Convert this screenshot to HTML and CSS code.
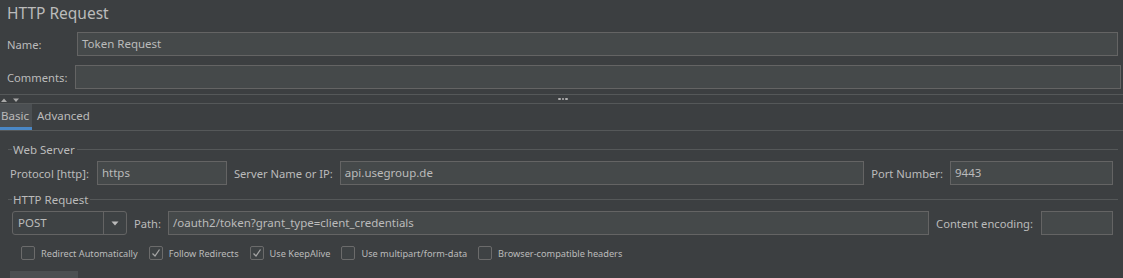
FILE: index.html
```html
<!DOCTYPE html>
<html>
<head>
<meta charset="utf-8">
<link rel="stylesheet" href="styles.css">
</head>
<body>
<div class="page">
  <div class="title">HTTP Request</div>
  <div class="field-row name-row">
    <label class="lbl name-lbl">Name:</label>
    <div class="input grow">Token Request</div>
  </div>
  <div class="field-row comments-row">
    <label class="lbl comments-lbl">Comments:</label>
    <div class="input grow"></div>
  </div>
  <div class="splitter">
    <div class="arrows">
      <svg width="20" height="6" viewBox="0 0 20 6"><path d="M1 5 L4 1.5 L7 5 Z" fill="#a9a9a9"/><path d="M13 1.5 L19 1.5 L16 5 Z" fill="#a9a9a9"/></svg>
    </div>
    <div class="dots"><span></span><span></span><span></span></div>
  </div>
  <div class="tabs">
    <div class="tab active">Basic</div>
    <div class="tab">Advanced</div>
  </div>
  <div class="group">
    <div class="group-title"><span>Web Server</span></div>
    <div class="field-row grp-row">
      <label class="lbl">Protocol [http]:</label>
      <div class="input protocol">https</div>
      <label class="lbl">Server Name or IP:</label>
      <div class="input grow">api.usegroup.de</div>
      <label class="lbl">Port Number:</label>
      <div class="input port">9443</div>
    </div>
  </div>
  <div class="group group2">
    <div class="group-title"><span>HTTP Request</span></div>
    <div class="field-row grp-row row2">
      <div class="combo">
        <div class="combo-text">POST</div>
        <div class="combo-btn"><svg width="8" height="5" viewBox="0 0 8 5"><path d="M0.5 0.5 L7.5 0.5 L4 4.5 Z" fill="#bbbbbb"/></svg></div>
      </div>
      <label class="lbl">Path:</label>
      <div class="input grow">/oauth2/token?grant_type=client_credentials</div>
      <label class="lbl">Content encoding:</label>
      <div class="input encoding"></div>
    </div>
    <div class="checks">
      <div class="check"><span class="box"></span><span class="ctext">Redirect Automatically</span></div>
      <div class="check"><span class="box"><svg width="12" height="12" viewBox="0 0 12 12"><path d="M2.5 6.5 L5 9 L9.5 2.5" fill="none" stroke="#a5a5a5" stroke-width="1.3"/></svg></span><span class="ctext">Follow Redirects</span></div>
      <div class="check"><span class="box"><svg width="12" height="12" viewBox="0 0 12 12"><path d="M2.5 6.5 L5 9 L9.5 2.5" fill="none" stroke="#a5a5a5" stroke-width="1.3"/></svg></span><span class="ctext">Use KeepAlive</span></div>
      <div class="check"><span class="box"></span><span class="ctext">Use multipart/form-data</span></div>
      <div class="check"><span class="box"></span><span class="ctext">Browser-compatible headers</span></div>
    </div>
  </div>
  <div class="bottom-btn"></div>
</div>
</body>
</html>
```

FILE: styles.css
```css
html, body {
  margin: 0;
  padding: 0;
  background: #3c3f41;
  height: 100%;
  overflow: hidden;
}
.page {
  font-family: "Noto Sans", "Open Sans", sans-serif;
  font-size: 11.2px;
  color: #bbbbbb;
}
.title {
  height: 32px;
  line-height: 27px;
  padding-left: 7px;
  font-size: 15.5px;
  color: #bbbbbb;
}
.field-row {
  display: flex;
  align-items: center;
  height: 24px;
}
.lbl {
  white-space: nowrap;
}
.name-row {
  padding-left: 7px;
  padding-right: 5px;
}
.name-lbl {
  width: 70px;
}
.comments-row {
  margin-top: 9px;
  padding-left: 7px;
  padding-right: 2px;
}
.comments-lbl {
  width: 68px;
}
.input {
  box-sizing: border-box;
  height: 24px;
  line-height: 22px;
  background: #45494a;
  border: 1px solid #646464;
  padding: 0 4px;
  font-size: 11.5px;
  color: #bbbbbb;
  white-space: nowrap;
  overflow: hidden;
}
.grow {
  flex: 1;
}
.splitter {
  margin-top: 5px;
  border-top: 1px solid #555859;
  border-bottom: 1px solid #555859;
  height: 8px;
  display: flex;
  align-items: center;
}
.arrows {
  display: flex;
  padding-top: 1px;
}
.dots {
  margin-left: 538px;
  display: flex;
  gap: 1px;
}
.dots span {
  width: 2.5px;
  height: 2.5px;
  border-radius: 50%;
  background: #b0b0b0;
}
.tabs {
  display: flex;
  height: 26px;
  border-bottom: 1px solid #555859;
}
.tab {
  box-sizing: border-box;
  height: 26px;
  line-height: 24px;
  padding: 0 3px 0 1px;
  font-size: 11.5px;
  color: #bbbbbb;
}
.tab.active {
  background: #4b4f52;
  border-bottom: 3px solid #4a88c7;
  line-height: 23px;
  width: 32px;
  padding: 0 0 0 1px;
}
.tab + .tab {
  padding-left: 5px;
}
.group {
  margin: 8px 5px 0 8px;
}
.group2 {
  margin-top: 4px;
}
.group-title {
  display: flex;
  align-items: center;
  height: 20px;
}
.group-title::before {
  content: "";
  width: 4px;
  border-top: 1px solid #555859;
}
.group-title span {
  padding: 0 2px 0 1px;
  font-size: 11.5px;
}
.group-title::after {
  content: "";
  flex: 1;
  border-top: 1px solid #555859;
}
.grp-row {
  margin-top: 2px;
  padding-left: 2px;
  padding-right: 5px;
  gap: 7px;
}
.protocol {
  width: 130px;
  margin-left: 1px;
}
.port {
  width: 163px;
}
.row2 {
  padding-left: 4px;
}
.encoding {
  width: 72px;
  margin-left: 1px;
}
.combo {
  box-sizing: border-box;
  width: 115px;
  height: 24px;
  border: 1px solid #646464;
  border-radius: 3px;
  background: #3e4244;
  display: flex;
  font-size: 11.5px;
}
.combo-text {
  flex: 1;
  line-height: 22px;
  padding-left: 5px;
  border-right: 1px solid #646464;
}
.combo-btn {
  width: 22px;
  display: flex;
  align-items: center;
  justify-content: center;
}
.checks {
  display: flex;
  align-items: center;
  margin-top: 11px;
  padding-left: 13px;
  gap: 11px;
  height: 14px;
}
.check {
  display: flex;
  align-items: center;
  gap: 6px;
}
.box {
  box-sizing: border-box;
  width: 14px;
  height: 14px;
  border: 1px solid #6b6b6b;
  border-radius: 2px;
  background: #3e4244;
  display: flex;
  align-items: center;
  justify-content: center;
}
.ctext {
  font-size: 9.2px;
  white-space: nowrap;
}
.bottom-btn {
  margin: 11px 0 0 10px;
  width: 68px;
  height: 12px;
  background: #4c5052;
}
```
